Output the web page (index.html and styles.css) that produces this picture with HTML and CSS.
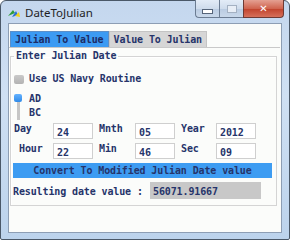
FILE: index.html
```html
<!DOCTYPE html>
<html lang="en">
<head>
  <meta charset="UTF-8">
  <title>DateToJulian</title>
  <link rel="stylesheet" href="styles.css">
</head>
<body>
  <div class="window">

    <!-- Title bar -->
    <div class="titlebar">
      <svg class="app-icon" width="14" height="12" viewBox="0 0 14 12">
        <path d="M1 9 L6 3 L8 6 Z" fill="#2f9e3a"/>
        <path d="M5 10 L9 4 L11 8 Z" fill="#2a6fd6"/>
        <path d="M8 9 L12 5 L13 10 Z" fill="#f2d21b"/>
      </svg>
      <span class="title">DateToJulian</span>
      <div class="controls">
        <div class="ctl min"><span></span></div>
        <div class="ctl max"><span></span></div>
        <div class="ctl close">&#x2715;</div>
      </div>
    </div>

    <!-- Client area -->
    <div class="client">
      <div class="tabs">
        <div class="tab active">Julian To Value</div>
        <div class="tab">Value To Julian</div>
      </div>

      <div class="page">
        <fieldset class="group">
          <legend>Enter Julian Date</legend>

          <div class="check"><span class="box"></span>Use US Navy Routine</div>

          <div class="era">
            <div class="track"><span class="knob"></span></div>
            <div class="era-labels">
              <span>AD</span>
              <span>BC</span>
            </div>
          </div>

          <div class="fields">
            <span class="lbl">Day</span><div class="inp">24</div>
            <span class="lbl mid">Mnth</span><div class="inp">05</div>
            <span class="lbl mid">Year</span><div class="inp">2012</div>
            <span class="lbl ind">Hour</span><div class="inp">22</div>
            <span class="lbl mid">Min</span><div class="inp">46</div>
            <span class="lbl mid">Sec</span><div class="inp">09</div>
          </div>

          <div class="convert">Convert To Modified Julian Date value</div>

          <div class="result">
            <span class="res-lbl">Resulting date value :</span>
            <div class="res-val">56071.91667</div>
          </div>
        </fieldset>
      </div>
    </div>
  </div>
</body>
</html>
```

FILE: styles.css
```css
/* Basic styling */
body {
  margin: 0;
  background: #ffffff;
}
.window {
  box-sizing: border-box;
  width: 290px;
  height: 240px;
  border: 1px solid #4a5868;
  border-radius: 6px 6px 2px 2px;
  padding: 0 7px 6px 7px;
  background: linear-gradient(180deg, #c4d7ee 0%, #cfe0f3 40%, #bcd3ec 100%);
  display: flex;
  flex-direction: column;
}

/* Title bar */
.titlebar {
  height: 22px;
  display: flex;
  align-items: center;
  font-family: "Noto Sans", "Open Sans", sans-serif;
  font-size: 11.5px;
  color: #1e1e1e;
}
.app-icon {
  margin-left: -1px;
  margin-top: 1px;
}
.title {
  margin-left: 4px;
  margin-top: 1px;
}
.controls {
  margin-left: auto;
  margin-right: -2px;
  align-self: flex-start;
  display: flex;
  margin-top: -1px;
}
.ctl {
  box-sizing: border-box;
  height: 18px;
  border: 1px solid #6b7c92;
  border-top: none;
  background: linear-gradient(180deg, #e3ecf7 0%, #cfdcec 50%, #b9cbe1 51%, #c9d8ea 100%);
  display: flex;
  align-items: center;
  justify-content: center;
}
.min {
  width: 24px;
  border-radius: 0 0 0 4px;
  border-right: none;
}
.min span {
  width: 9px;
  height: 3px;
  margin-top: 5px;
  background: #ffffff;
  border: 1px solid #56657a;
}
.max {
  width: 24px;
  border-right: none;
}
.max span {
  width: 8px;
  height: 6px;
  border: 1px solid #a4b1c2;
  background: #e8eef6;
}
.close {
  width: 41px;
  border-radius: 0 0 4px 0;
  border-color: #6e3a34;
  background: linear-gradient(180deg, #e4a092 0%, #d0644f 50%, #c0412b 51%, #d6705a 100%);
  color: #ffffff;
  font-family: "DejaVu Sans", sans-serif;
  font-size: 10px;
  font-weight: bold;
}

/* Client */
.client {
  flex: 1;
  background: #fbfcfa;
  border: 1px solid #8d9eb4;
  font-family: "DejaVu Sans Mono", "Liberation Mono", monospace;
  font-size: 10px;
  font-weight: bold;
  line-height: 12px;
  letter-spacing: -0.12px;
  color: #26346a;
}
.tabs {
  display: flex;
  padding: 7px 0 0 1px;
}
.tab {
  box-sizing: border-box;
  height: 16px;
  padding: 2px 4px 0 4px;
  background: #d6d6d6;
  border: 1px solid #c4c4c4;
  border-bottom: none;
}
.tab.active {
  background: #3c9bf3;
  border-color: #5c8fc8;
  color: #1d2c66;
}
.page {
  border-top: 1px solid #c9c9c9;
  margin-right: 1px;
}

/* Group box */
.group {
  margin: 2px 3px 0 1px;
  padding: 0 0 6px 0;
  border: 1px solid #d4d4d4;
  box-shadow: inset 1px 1px 0 #ffffff;
}
.group legend {
  margin-left: 3px;
  padding: 0 2px;
}
.check {
  display: flex;
  align-items: center;
  margin: 11px 0 0 3px;
}
.box {
  width: 10px;
  height: 9px;
  border-radius: 2px;
  background: linear-gradient(180deg, #c9c9c9, #b3b3b3);
  margin: 1px 5px 0 0;
}
.era {
  display: flex;
  margin: 8px 0 0 3px;
}
.track {
  width: 8px;
  height: 26px;
  display: flex;
  flex-direction: column;
  align-items: center;
  margin-top: 1px;
}
.track::after {
  content: "";
  width: 3px;
  flex: 1;
  background: #c6c6c6;
}
.knob {
  width: 8px;
  height: 8px;
  border-radius: 2px;
  background: linear-gradient(180deg, #64b2ff, #2f8ae8);
}
.era-labels {
  display: flex;
  flex-direction: column;
  gap: 2px;
  margin-left: 7px;
}

/* Fields grid */
.fields {
  display: grid;
  grid-template-columns: 40px 40px 42px 40px 41px 40px;
  grid-auto-rows: 16px;
  row-gap: 4px;
  align-items: center;
  margin: 3px 0 0 2px;
}
.lbl {
  margin-top: -5px;
  padding-left: 1px;
}
.lbl.mid {
  padding-left: 6px;
}
.lbl.ind {
  padding-left: 6px;
}
.inp {
  box-sizing: border-box;
  height: 16px;
  width: 40px;
  background: #ffffff;
  border: 1px solid #cfcfcf;
  padding: 3px 0 0 3px;
}
.convert {
  margin: 4px 4px 0 2px;
  height: 15px;
  background: #3d9cf2;
  text-align: center;
  line-height: 15px;
}
.result {
  display: flex;
  margin: 4px 0 0 2px;
}
.res-lbl {
  width: 137px;
  padding-top: 4px;
}
.res-val {
  box-sizing: border-box;
  width: 111px;
  height: 17px;
  background: #c8c8c8;
  padding: 4px 0 0 3px;
}
```
